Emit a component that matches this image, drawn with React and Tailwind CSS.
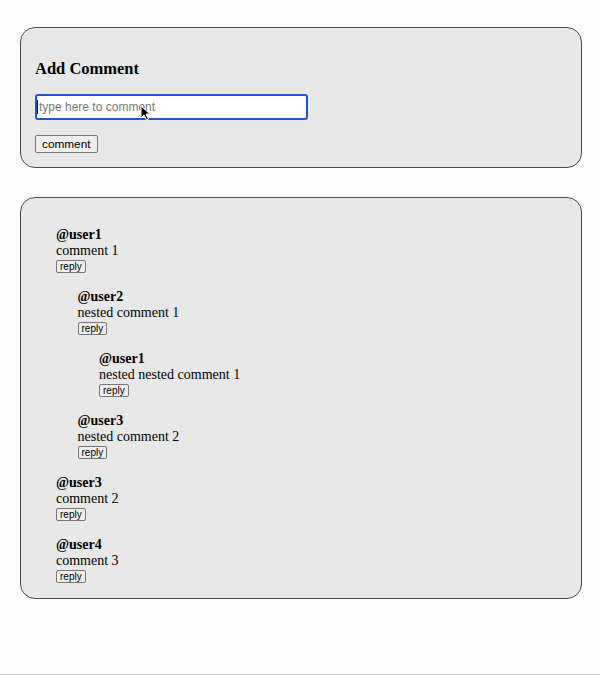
import React from 'react';

const comments = [
    {
        user: '@user1',
        text: 'comment 1',
        replies: [
            {
                user: '@user2',
                text: 'nested comment 1',
                replies: [{ user: '@user1', text: 'nested nested comment 1', replies: [] }]
            },
            { user: '@user3', text: 'nested comment 2', replies: [] }
        ]
    },
    { user: '@user3', text: 'comment 2', replies: [] },
    { user: '@user4', text: 'comment 3', replies: [] }
];

const Comment = ({ item }) => (
    <div>
        <div className="pb-[16px]">
            <div className="font-bold text-[14px] leading-[16px]">{item.user}</div>
            <div className="text-[14px] leading-[16px]">{item.text}</div>
            <button className="mt-[1px] h-[13px] flex items-center px-[3px] text-[10px] leading-[11px] font-['Liberation_Sans',Arial,sans-serif] bg-[#efefef] border border-[#767676] rounded-[2px] text-black">
                reply
            </button>
        </div>
        {item.replies.length > 0 && (
            <div className="ml-[21.5px]">
                {item.replies.map((r, i) => (
                    <Comment key={i} item={r} />
                ))}
            </div>
        )}
    </div>
);

const App = () => {
    return (
        <div className="w-full h-[675px] bg-[#fdfcfe] border-b border-[#c4c4c4] text-black font-['Liberation_Serif','Times_New_Roman',serif]">
            <div className="pt-[27px] pl-[20px]">
                <div className="w-[562px] h-[141px] bg-[#e9e8e9] border border-[#4a4a4a] rounded-[15px] pl-[14px] pt-[31px]">
                    <h3 className="text-[16.5px] font-bold leading-[19px]">Add Comment</h3>
                    <div className="relative mt-[16px] w-[273px] h-[26px]">
                        <input
                            type="text"
                            placeholder="type here to comment"
                            className="w-full h-full bg-white border-2 border-[#1659d1] rounded-[3px] pl-[2px] text-[12px] font-['Liberation_Sans',Arial,sans-serif] placeholder:text-[#777] outline-none"
                        />
                        <span className="absolute left-[2px] top-[6px] w-px h-[14px] bg-black" />
                        <svg className="absolute left-[105px] top-[11px]" width="11" height="16" viewBox="0 0 11 16">
                            <path d="M1 1 L1 13 L4 10 L6.5 15 L8.5 14 L6 9 L10 9 Z" fill="#000" stroke="#fff" strokeWidth="1" strokeLinejoin="round" />
                        </svg>
                    </div>
                    <button className="mt-[15px] h-[18px] flex items-center px-[6px] text-[11.8px] leading-[14px] font-['Liberation_Sans',Arial,sans-serif] bg-[#efefef] border border-[#767676] rounded-[2px]">
                        comment
                    </button>
                </div>

                <div className="mt-[29px] w-[562px] h-[402px] bg-[#e9e8e9] border border-[#4a4a4a] rounded-[15px] pl-[35px] pt-[29px]">
                    {comments.map((c, i) => (
                        <Comment key={i} item={c} />
                    ))}
                </div>
            </div>
        </div>
    );
};

export default App;
